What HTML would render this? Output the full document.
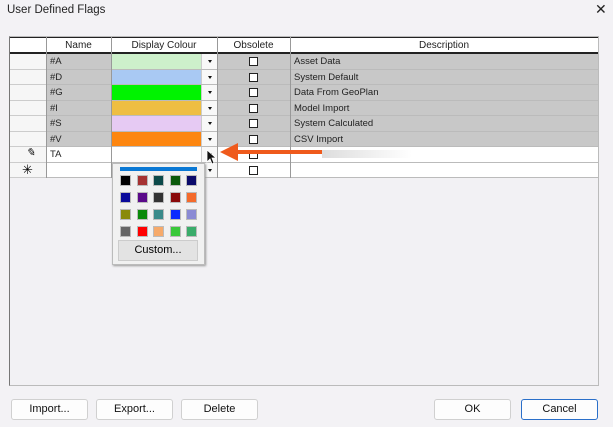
<!DOCTYPE html><html><head><style>
*{margin:0;padding:0;box-sizing:border-box}
body{width:613px;height:427px;background:#f3f2f5;font-family:"Liberation Sans",sans-serif;position:relative;overflow:hidden}
.a{position:absolute}
.t{font-size:10px;color:#222}
.cb{position:absolute;width:9px;height:9px;border:1px solid #222;background:#fff;left:249px}
.btn{position:absolute;top:399px;height:21px;width:77px;background:#fdfdfd;border:1px solid #d0d0d0;border-radius:3px;font-size:11px;text-align:center;line-height:19px;color:#111}
.sw{position:absolute;width:11px;height:11px;border:1px solid #bbb}
.dd{position:absolute;left:201px;width:16px;background:#f8f8f8;border-left:1px solid #ccc}
.dd:after{content:"";position:absolute;left:6px;top:6px;border-left:2px solid transparent;border-right:2px solid transparent;border-top:3px solid #111}
</style></head><body>
<div class="a" style="left:7px;top:4px;font-size:11.5px;color:#222">User Defined Flags</div>
<div class="a" style="left:595px;top:1px;font-size:14px;color:#222">✕</div>
<div class="a" style="left:9px;top:36px;width:590px;height:350px;border:1px solid #bbb;border-left:1px solid #777;background:#f2f1f4"></div>
<div class="a" style="left:10px;top:37px;width:588px;height:17px;background:#fff;border-bottom:2px solid #222;border-top:1px solid #222"></div>
<div class="a t" style="left:46px;top:40px;width:65px;text-align:center">Name</div>
<div class="a t" style="left:111px;top:40px;width:106px;text-align:center">Display Colour</div>
<div class="a t" style="left:217px;top:40px;width:73px;text-align:center">Obsolete</div>
<div class="a t" style="left:290px;top:40px;width:308px;text-align:center">Description</div>
<div id="rows"></div>
<script>
var rows=[["#A","#cdf0cb","Asset Data"],["#D","#a9c9f3","System Default"],["#G","#00f300","Data From GeoPlan"],["#I","#eebe42","Model Import"],["#S","#e6caf3","System Calculated"],["#V","#fd8610","CSV Import"],["TA","#fff",""],["","#fff",""]];
var tops=[54,70,85,101,116,132,147,163],h='';
rows.forEach(function(r,i){var y=tops[i],hh=(tops[i+1]||178)-y,g=i<6;
h+='<div class="a" style="left:10px;top:'+y+'px;width:36px;height:'+hh+'px;background:#f6f6f6;border-bottom:1px solid #ccc"></div>';
h+='<div class="a" style="left:46px;top:'+y+'px;width:552px;height:'+hh+'px;background:'+(g?'#c8c8c8':'#fff')+';border-bottom:1px solid #bbb"></div>';
h+='<div class="a" style="left:112px;top:'+y+'px;width:89px;height:'+(hh-1)+'px;background:'+r[1]+'"></div>';
h+='<div class="dd" style="top:'+y+'px;height:'+(hh-1)+'px"></div>';
h+='<div class="cb" style="top:'+(y+3)+'px"></div>';
h+='<div class="a t" style="left:50px;top:'+(y+2)+'px;font-size:9.5px">'+r[0]+'</div>';
h+='<div class="a t" style="left:294px;top:'+(y+2)+'px;font-size:9.5px">'+r[2]+'</div>';});
['46','111','217','290'].forEach(function(x){h+='<div class="a" style="left:'+x+'px;top:37px;width:1px;height:141px;background:#999"></div>'});
document.getElementById('rows').innerHTML=h;
</script>
<div class="a" style="left:26px;top:146px;font-size:11px;font-style:italic">✎</div>
<div class="a" style="left:22px;top:162px;font-size:13px">✳</div>
<div class="a" style="left:322px;top:150px;width:90px;height:8px;background:linear-gradient(90deg,#ddd,#eee,#fff)"></div>
<svg class="a" style="left:216px;top:142px" width="110" height="20"><path d="M20 10H106" stroke="#ef5a1c" stroke-width="4"/><path d="M4 10L22 1V19Z" fill="#ef5a1c"/></svg>
<svg class="a" style="left:206px;top:149px" width="12" height="16"><path d="M1 1V13L4 10L6 15L8 14L6 9H10Z" fill="#111" stroke="#fff" stroke-width=".8"/></svg>
<div class="a" style="left:112px;top:163px;width:93px;height:102px;background:#f1f1f1;border:1px solid #bbb;box-shadow:1px 1px 2px #999"></div>
<div class="a" style="left:120px;top:167px;width:77px;height:4px;background:#0a78d4"></div>
<div id="sw"></div>
<script>
var c=[["#000","#a53232","#0c4a4a","#0b5a0b","#0a0a6a"],["#0a0a9a","#5a0a8a","#333","#8a0a0a","#f46a2a"],["#8a8a0a","#0a8a0a","#3a8a8a","#0a2aff","#8a8ad4"],["#666","#f00","#f6aa6a","#3ac83a","#3aac6a"]],s='';
c.forEach(function(r,i){r.forEach(function(col,j){s+='<div class="sw" style="left:'+(120+j*16.5)+'px;top:'+(175+i*17)+'px;background:'+col+'"></div>'})});
document.getElementById('sw').innerHTML=s;
</script>
<div class="a" style="left:118px;top:240px;width:80px;height:21px;background:#e3e3e3;border:1px solid #ccc;font-size:11px;text-align:center;line-height:19px">Custom...</div>
<div class="btn" style="left:11px">Import...</div>
<div class="btn" style="left:96px">Export...</div>
<div class="btn" style="left:181px">Delete</div>
<div class="btn" style="left:434px">OK</div>
<div class="btn" style="left:521px;border:1px solid #2a6fc9">Cancel</div>
</body></html>
